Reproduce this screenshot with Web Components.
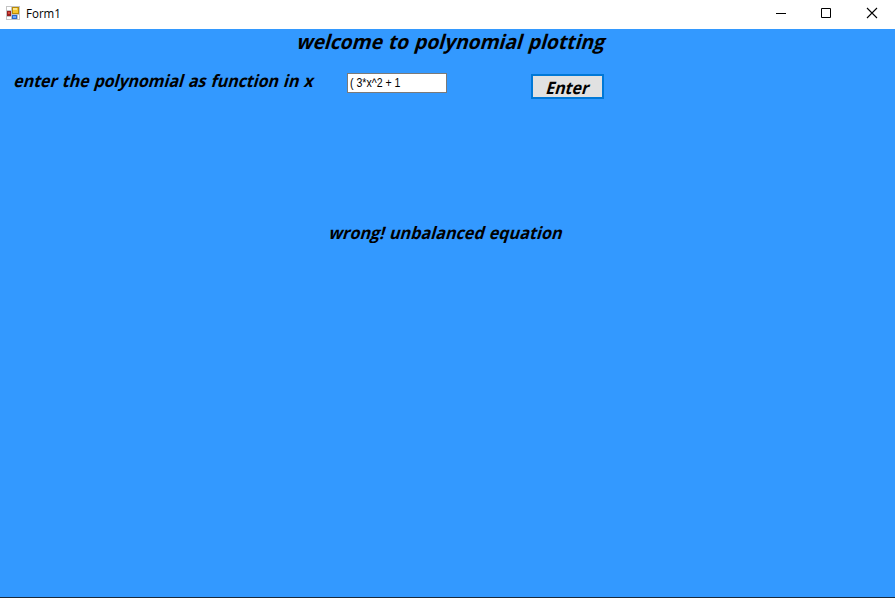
<!DOCTYPE html>
<html lang="en"><head><meta charset="utf-8"><title>Form1</title>
<style>html,body{margin:0;height:100%;overflow:hidden;background:#39f}</style></head>
<body><form-window></form-window>
<script>
class SlantLabel extends HTMLElement{
 constructor(){super();this.attachShadow({mode:'open'}).innerHTML=`<style>
 :host{display:block;white-space:nowrap;color:#000;font:700 17px/24px "Open Sans","Noto Sans",sans-serif;word-spacing:1px}
 span{display:inline-block;transform-origin:0 75%;transform:scaleX(var(--sx,1)) skewX(-17deg)}
 </style><span><slot></slot></span>`}
 connectedCallback(){
  const w=+this.getAttribute('fit'),s=this.shadowRoot.querySelector('span');
  this.style.width=w+'px';
  s.style.setProperty('--sx',w/s.offsetWidth);
 }}
class TitleBar extends HTMLElement{
 constructor(){super();this.attachShadow({mode:'open'}).innerHTML=`<style>
 :host{display:flex;height:29px;background:#fff;align-items:flex-start;box-sizing:border-box;padding-left:6px}
 .i{margin-top:6px;flex:none}
 .t{font:12px/16px "Open Sans","Noto Sans",sans-serif;margin:6px 0 0 6px;flex:1;color:#000}
 .t span{display:inline-block;transform-origin:0 0;transform:scaleX(.96)}
 .b{display:flex}.b svg{width:46px;height:28px;display:block}
 </style>
 <svg class="i" width="14" height="14" shape-rendering="crispEdges"><path fill="#c4c4c4" d="M0 0h14v14H0z"/><path fill="#fff" d="M1 1h4v3H1zM1 11h4v2H1zM12 9h1v4h-1z"/>
 <path fill="#982020" d="M1 5h4v5H1z"/><path fill="#d84a3a" d="M2 6h2v2H2z"/><path fill="#b88a08" d="M6 1h7v7H6z"/><path fill="#f5c52c" d="M7 2h5v5H7z"/><path fill="#ffe68a" d="M7 2h4v2H7z"/>
 <path fill="#2868cc" d="M6 9h5v4H6z"/><path fill="#70a6fa" d="M7 10h3v2H7z"/></svg>
 <div class="t"><span><slot></slot></span></div>
 <div class="b">
 <svg viewBox="0 0 46 28"><path d="M19 13.5h10" stroke="#000"/></svg>
 <svg viewBox="0 0 46 28"><path d="M18.5 8.5h9v9h-9z" fill="none" stroke="#000"/></svg>
 <svg viewBox="0 0 46 28"><path d="M18 8l10 10M28 8L18 18" stroke="#000" stroke-width="1.1"/></svg></div>`}}
class TextBox extends HTMLElement{
 constructor(){super();this.attachShadow({mode:'open'}).innerHTML=`<style>
 :host{display:block;box-sizing:border-box;width:100px;height:20px;border:1px solid #7a7a7a;background:#fff;padding-left:2px;font:12px/18px "Liberation Sans",Arial,sans-serif;color:#000;white-space:nowrap}
 span{display:inline-block;transform-origin:0 50%;transform:scaleX(.88)}
 </style><span><slot></slot></span>`}}
class PushButton extends HTMLElement{
 constructor(){super();this.attachShadow({mode:'open'}).innerHTML=`<style>
 :host{display:flex;justify-content:center;box-sizing:border-box;width:73px;height:25px;border:2px solid #0078d7;background:#e1e1e1}
 </style><slot></slot>`}}
class FormWindow extends HTMLElement{
 constructor(){super();this.attachShadow({mode:'open'}).innerHTML=`<style>
 :host{display:flex;flex-direction:column;height:100vh;box-sizing:border-box;background:#39f;border-bottom:1px solid #1b2a3a}
 .h{margin:1px 0 0 296px;font-size:20px}
 .r{display:flex;margin-top:19px;padding-left:13px;align-items:flex-start}
 .r>slant-label{margin-top:-4px}
 text-box{margin-left:35px}push-button{margin:1px 0 0 84px}
 push-button slant-label{margin-left:-2px}
 .m{margin:122px 0 0 328px}
 </style>
 <title-bar>Form1</title-bar>
 <slant-label class="h" fit="308">welcome to polynomial plotting</slant-label>
 <div class="r"><slant-label fit="299">enter the polynomial as function in x</slant-label><text-box>( 3*x^2 + 1</text-box><push-button><slant-label fit="43">Enter</slant-label></push-button></div>
 <slant-label class="m" fit="233">wrong! unbalanced equation</slant-label>`}}
customElements.define('slant-label',SlantLabel);
customElements.define('title-bar',TitleBar);
customElements.define('text-box',TextBox);
customElements.define('push-button',PushButton);
customElements.define('form-window',FormWindow);
</script></body></html>
